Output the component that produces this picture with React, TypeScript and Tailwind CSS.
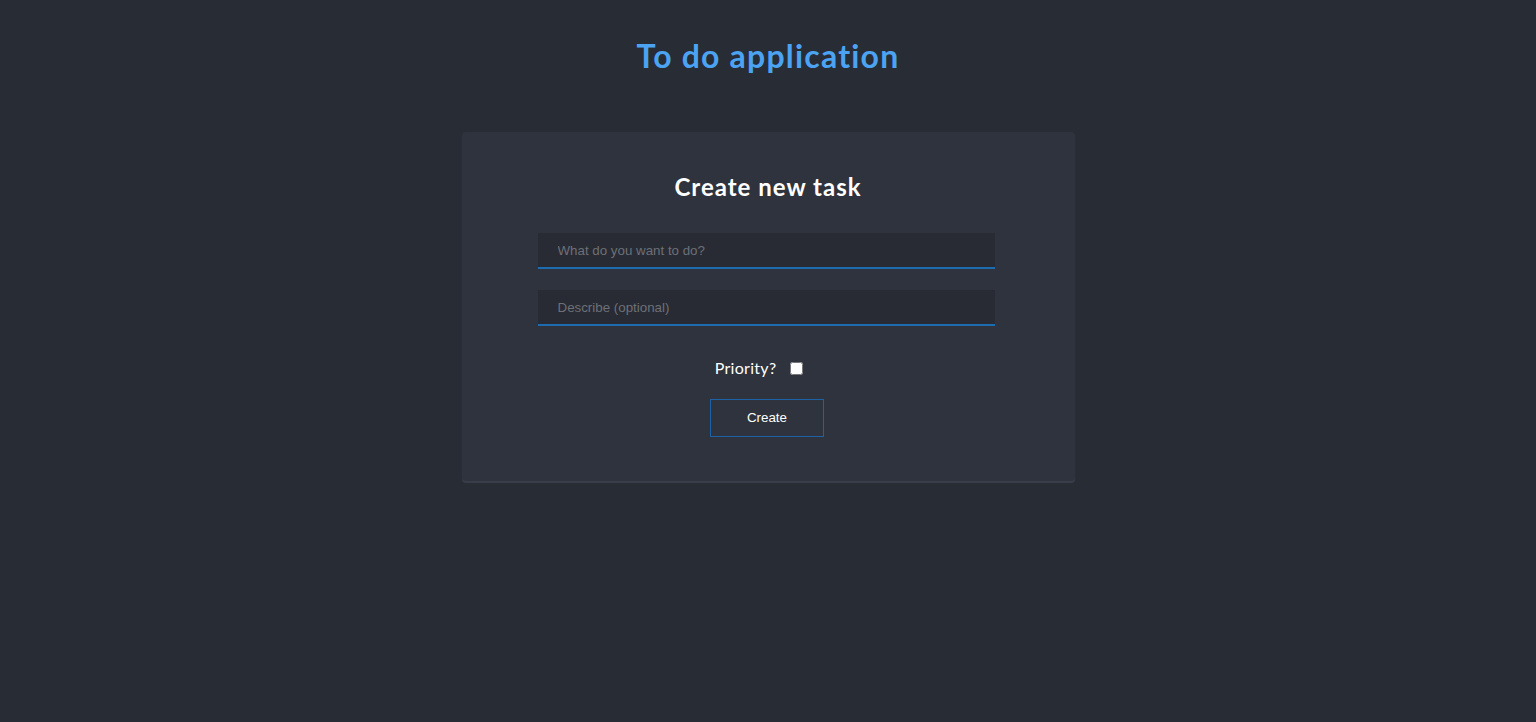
import React from "react";

export default function App() {
  return (
    <div className="min-h-[722px] w-full bg-[#282c35] flex flex-col items-center" style={{ fontFamily: "Lato, 'Noto Sans', sans-serif" }}>
      <h1 className="mt-[36px] h-[40px] leading-[40px] text-[32px] font-bold tracking-[1.2px] text-[#4ba3f1]">To do application</h1>
      <div className="mt-[56px] w-[613px] rounded-[4px] bg-[#2f333d] shadow-[0_2px_1px_rgba(70,75,90,0.6)] flex flex-col items-center pt-[39px] pb-[44px]">
        <h2 className="h-[32px] leading-[32px] text-[24px] font-bold tracking-[1px] text-white">Create new task</h2>
        <input
          type="text"
          placeholder="What do you want to do?"
          className="mt-[30px] mr-[4px] w-[457px] h-[36px] bg-[#282b33] border-0 border-b-2 border-[#1e6cb0] pl-[20px] text-[13.33px] text-white placeholder:text-[#6d7077] outline-none"
          style={{ fontFamily: "'Liberation Sans', Arial, sans-serif" }}
        />
        <input
          type="text"
          placeholder="Describe (optional)"
          className="mt-[21px] mr-[4px] w-[457px] h-[36px] bg-[#282b33] border-0 border-b-2 border-[#1e6cb0] pl-[20px] text-[13.33px] text-white placeholder:text-[#6d7077] outline-none"
          style={{ fontFamily: "'Liberation Sans', Arial, sans-serif" }}
        />
        <div className="mt-[30px] mr-[18px] h-[24px] flex items-center gap-[14px]">
          <span className="text-[16px] tracking-[0.3px] text-white">Priority?</span>
          <input type="checkbox" className="w-[13px] h-[13px] m-0" />
        </div>
        <button
          className="mt-[19px] mr-[2px] w-[114px] h-[38px] border border-[#1d62a6] bg-transparent text-white text-[13.33px]"
          style={{ fontFamily: "'Liberation Sans', Arial, sans-serif" }}
        >
          Create
        </button>
      </div>
    </div>
  );
}
